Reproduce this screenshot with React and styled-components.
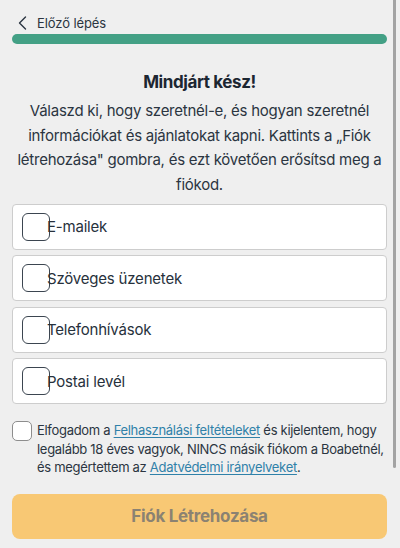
import React from "react";
import styled, { createGlobalStyle } from "styled-components";

const Global = createGlobalStyle`
  html, body { margin: 0; padding: 0; background: #efefef; }
  body { font-family: Inter, "Noto Sans", sans-serif; color: #27313c; -webkit-font-smoothing: antialiased; }
  * { box-sizing: border-box; }
`;

const Page = styled.div`
  position: relative;
  width: 400px;
  height: 548px;
  overflow: hidden;
  padding: 12px 13px 0 12px;
  display: flex;
  flex-direction: column;
`;

const ScrollThumb = styled.div`
  position: absolute;
  right: 4px;
  top: 0;
  width: 3px;
  height: 468px;
  border-radius: 0 0 2px 2px;
  background: #a3a3a3;
`;

const BackLink = styled.div`
  display: flex;
  align-items: center;
  gap: 10px;
  height: 21px;
  padding-left: 6px;
  font-size: 13px;
  letter-spacing: -0.1px;
  color: #2b3541;
`;

const Progress = styled.div`
  margin-top: 1px;
  height: 10px;
  border-radius: 5px;
  background: #43a085;
`;

const Title = styled.h1`
  margin: 27px 0 0;
  text-align: center;
  font-size: 17px;
  font-weight: 700;
  line-height: 22px;
  letter-spacing: -0.4px;
  color: #1c2631;
`;

const Intro = styled.p`
  margin: 6px 0 0;
  text-align: center;
  font-size: 15px;
  line-height: 24.7px;
  letter-spacing: -0.25px;
  color: #2b3541;
`;

const Options = styled.div`
  margin-top: 6px;
  display: flex;
  flex-direction: column;
  gap: 5.5px;
`;

const Option = styled.label`
  display: flex;
  align-items: center;
  height: 46px;
  padding-left: 9px;
  background: #ffffff;
  border: 1px solid #cdcdcd;
  border-radius: 4px;
  font-size: 15px;
  letter-spacing: -0.2px;
  color: #27313c;
`;

const Box = styled.span`
  flex: none;
  width: ${p => p.$size}px;
  height: ${p => p.$size}px;
  border: 1px solid ${p => p.$border};
  border-radius: ${p => p.$radius}px;
  background: #fff;
`;

const OptionText = styled.span`
  margin-left: -3px;
`;

const Terms = styled.div`
  margin-top: 17px;
  display: flex;
  align-items: flex-start;
  gap: 5px;
`;

const TermsText = styled.div`
  font-size: 13px;
  line-height: 18.5px;
  letter-spacing: -0.3px;
  color: #2b3541;
`;

const Link = styled.span`
  color: #2f81a9;
  text-decoration: underline;
  text-underline-offset: 2px;
`;

const Button = styled.button`
  margin-top: 17px;
  height: 45px;
  width: 100%;
  border: none;
  border-radius: 8px;
  background: #f8c874;
  font-family: inherit;
  font-size: 17px;
  font-weight: 700;
  letter-spacing: -0.3px;
  color: #8b8272;
`;

const Chevron = () => (
  <svg width="9" height="14" viewBox="0 0 9 14" fill="none">
    <path d="M7.5 1 L1.5 7 L7.5 13" stroke="#2b3541" strokeWidth="1.4" strokeLinecap="round" strokeLinejoin="round" />
  </svg>
);

const items = ["E-mailek", "Szöveges üzenetek", "Telefonhívások", "Postai levél"];

export default function App() {
  return (
    <>
      <Global />
      <Page>
        <BackLink><Chevron />Előző lépés</BackLink>
        <Progress />
        <Title>Mindjárt kész!</Title>
        <Intro>
          Válaszd ki, hogy szeretnél-e, és hogyan szeretnél információkat és ajánlatokat kapni. Kattints a „Fiók létrehozása" gombra, és ezt követően erősítsd meg a fiókod.
        </Intro>
        <Options>
          {items.map(t => (
            <Option key={t}>
              <Box $size={28} $border="#3b4550" $radius={6} />
              <OptionText>{t}</OptionText>
            </Option>
          ))}
        </Options>
        <Terms>
          <Box $size={20} $border="#8d8d8d" $radius={5} />
          <TermsText>
            Elfogadom a <Link>Felhasználási feltételeket</Link> és kijelentem, hogy legalább 18 éves vagyok, NINCS másik fiókom a Boabetnél, és megértettem az <Link>Adatvédelmi irányelveket</Link>.
          </TermsText>
        </Terms>
        <Button>Fiók Létrehozása</Button>
        <ScrollThumb />
      </Page>
    </>
  );
}
